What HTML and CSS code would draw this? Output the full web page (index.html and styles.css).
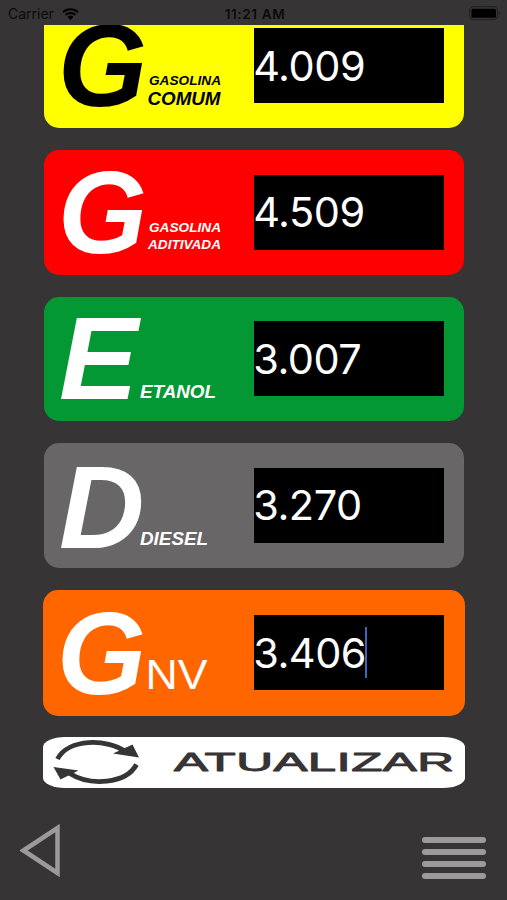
FILE: index.html
```html
<!DOCTYPE html>
<html lang="pt-BR">
<head>
  <meta charset="UTF-8" />
  <title>Preços</title>
  <link rel="stylesheet" href="styles.css">
</head>
<body>

  <header class="status-bar">
    <div class="carrier">
      <span class="carrier-name">Carrier</span>
      <svg class="wifi" viewBox="0 0 17 12" width="17" height="12">
        <path d="M1 4.2a10.8 10.8 0 0 1 15 0M3.6 6.9a7 7 0 0 1 9.8 0" fill="none" stroke="#000" stroke-width="2" />
        <path d="M5.5 9a4.3 4.3 0 0 1 6 0L8.500 12z" />
      </svg>
    </div>
    <span class="time">11:21 AM</span>
    <svg class="battery" viewBox="0 0 33 15" width="33" height="15">
      <rect x="0.700" y="0.700" width="28" height="13" rx="4" fill="none" stroke="#232122" stroke-width="1.200" />
      <rect x="2.500" y="2.700" width="24.500" height="9" rx="1.500" />
      <path d="M30.500 5v4.500q2-2.200 0-4.500" fill="#232122" />
    </svg>
  </header>

  <main class="content">
    <div class="card comum">
      <svg class="logo" viewBox="0 0 200 124">
        <text class="letter" x="14" y="102" textLength="89" lengthAdjust="spacingAndGlyphs">G</text>
        <text class="name" x="105" y="81" font-size="13" textLength="72" lengthAdjust="spacingAndGlyphs">GASOLINA</text>
        <text class="name" x="103.500" y="100.500" font-size="18.500" textLength="73" lengthAdjust="spacingAndGlyphs">COMUM</text>
      </svg>
      <div class="price">4.009</div>
    </div>

    <div class="card aditivada">
      <svg class="logo" viewBox="0 0 200 124">
        <text class="letter" x="14" y="103" textLength="89" lengthAdjust="spacingAndGlyphs">G</text>
        <text class="name" x="105" y="81.500" font-size="13" textLength="72" lengthAdjust="spacingAndGlyphs">GASOLINA</text>
        <text class="name" x="104" y="99" font-size="13" textLength="73" lengthAdjust="spacingAndGlyphs">ADITIVADA</text>
      </svg>
      <div class="price">4.509</div>
    </div>

    <div class="card etanol">
      <svg class="logo" viewBox="0 0 200 124">
        <text class="letter" x="15" y="102" textLength="79" lengthAdjust="spacingAndGlyphs">E</text>
        <text class="name" x="96" y="101" font-size="18.500" textLength="76" lengthAdjust="spacingAndGlyphs">ETANOL</text>
      </svg>
      <div class="price">3.007</div>
    </div>

    <div class="card diesel">
      <svg class="logo" viewBox="0 0 200 124">
        <text class="letter" x="15" y="104.500" textLength="85.500" lengthAdjust="spacingAndGlyphs">D</text>
        <text class="name" x="96" y="102" font-size="18.500" textLength="68" lengthAdjust="spacingAndGlyphs">DIESEL</text>
      </svg>
      <div class="price">3.270</div>
    </div>

    <div class="card gnv">
      <svg class="logo" viewBox="0 0 200 124">
        <text class="letter" x="14" y="102.500" textLength="89" lengthAdjust="spacingAndGlyphs">G</text>
        <text class="nv" x="102.500" y="98" textLength="62" lengthAdjust="spacingAndGlyphs">NV</text>
      </svg>
      <div class="price">3.406<span class="cursor"></span></div>
    </div>

    <div class="update">
      <svg viewBox="0 0 422 51" width="422" height="51">
        <g fill="none" stroke="#373435" stroke-width="4.800">
          <path d="M14.500 22C25 1.500 64 1 83 15" />
          <path d="M93.500 27.500C83 47 47 49.500 26 36" />
        </g>
        <path d="M89.500 7.500L96 20.500L70 16.500Z" fill="#373435" />
        <path d="M10.500 30L35.500 33.500L17.500 42.500Z" fill="#373435" />
        <text class="update-text" transform="translate(131 33.500) scale(2 1)" textLength="140">ATUALIZAR</text>
      </svg>
    </div>
  </main>

  <footer class="bottom-bar">
    <svg class="back" viewBox="0 0 40 54" width="40" height="54">
      <path d="M3.500 26.500L37.500 4V49Z" fill="none" stroke="#9c9a9b" stroke-width="4.500" />
    </svg>
    <div class="menu">
      <span></span>
      <span></span>
      <span></span>
      <span></span>
    </div>
  </footer>

</body>
</html>
```
FILE: styles.css
```css
html, body {
  margin: 0;
  padding: 0;
  overflow: hidden;
}

body {
  height: 900px;
  display: flex;
  flex-direction: column;
  background: #373435;
  font-family: Inter, "Liberation Sans", sans-serif;
}

.status-bar {
  height: 25px;
  flex-shrink: 0;
  display: grid;
  grid-template-columns: 1fr auto 1fr;
  align-items: center;
  padding: 2px 5px 0 8px;
  box-sizing: border-box;
  font-size: 14px;
  color: #0b0a0a;
}

.carrier {
  display: flex;
  align-items: center;
  gap: 8px;
}

.time {
  font-weight: 600;
  font-size: 13.6px;
  letter-spacing: 0.6px;
}

.battery {
  justify-self: end;
}

/* the list is scrolled, so the first card is cut at the top */
.content {
  height: 762.5px;
  flex-shrink: 0;
  display: flex;
  flex-direction: column;
  justify-content: flex-end;
  align-items: center;
  gap: 22px;
  overflow: hidden;
}

.card {
  width: 420px;
  height: 124.5px;
  flex-shrink: 0;
  display: flex;
  align-items: center;
  margin-left: 1px;
  border-radius: 15px;
}

.logo {
  width: 200px;
  height: 124px;
  margin-right: 10px;
  overflow: visible;
  fill: #fff;
  font-family: "Liberation Sans", Arial, sans-serif;
}

.letter {
  font-size: 117px;
  font-weight: bold;
  font-style: italic;
}

.name {
  font-weight: bold;
  font-style: italic;
}

.nv {
  font-size: 43px;
}

.price {
  width: 190px;
  height: 75px;
  display: flex;
  align-items: center;
  background: #000;
  color: #fff;
  font-size: 41.5px;
  letter-spacing: -0.5px;
  text-indent: -0.8px;
}

.cursor {
  width: 2px;
  height: 51px;
  margin-left: -1px;
  background: #3f63bf;
}

.comum {
  background: #ff0;
}

.comum .logo {
  fill: #000;
}

.aditivada {
  background: #f00;
}

.etanol {
  background: #039833;
}

.diesel {
  background: #686667;
}

.gnv {
  width: 422px;
  height: 126px;
  background: #ff6600;
}

.gnv .price {
  margin-left: 1px;
}

.update {
  width: 422px;
  height: 51px;
  flex-shrink: 0;
  margin: -1px 0 0 1px;
  background: #fff;
  border-radius: 22px / 10px;
}

.update-text {
  font-family: "Liberation Sans", Arial, sans-serif;
  font-size: 25.5px;
  fill: #373435;
  stroke: #373435;
  stroke-width: 0.9px;
  stroke-linejoin: round;
}

.bottom-bar {
  flex: 1;
  display: flex;
  justify-content: space-between;
  align-items: flex-start;
  padding: 36.5px 21px 0 20px;
}

.menu {
  width: 64px;
  display: flex;
  flex-direction: column;
  gap: 6px;
  padding-top: 13px;
}

.menu span {
  height: 6px;
  border-radius: 3px;
  background: #9c9a9b;
}
```
